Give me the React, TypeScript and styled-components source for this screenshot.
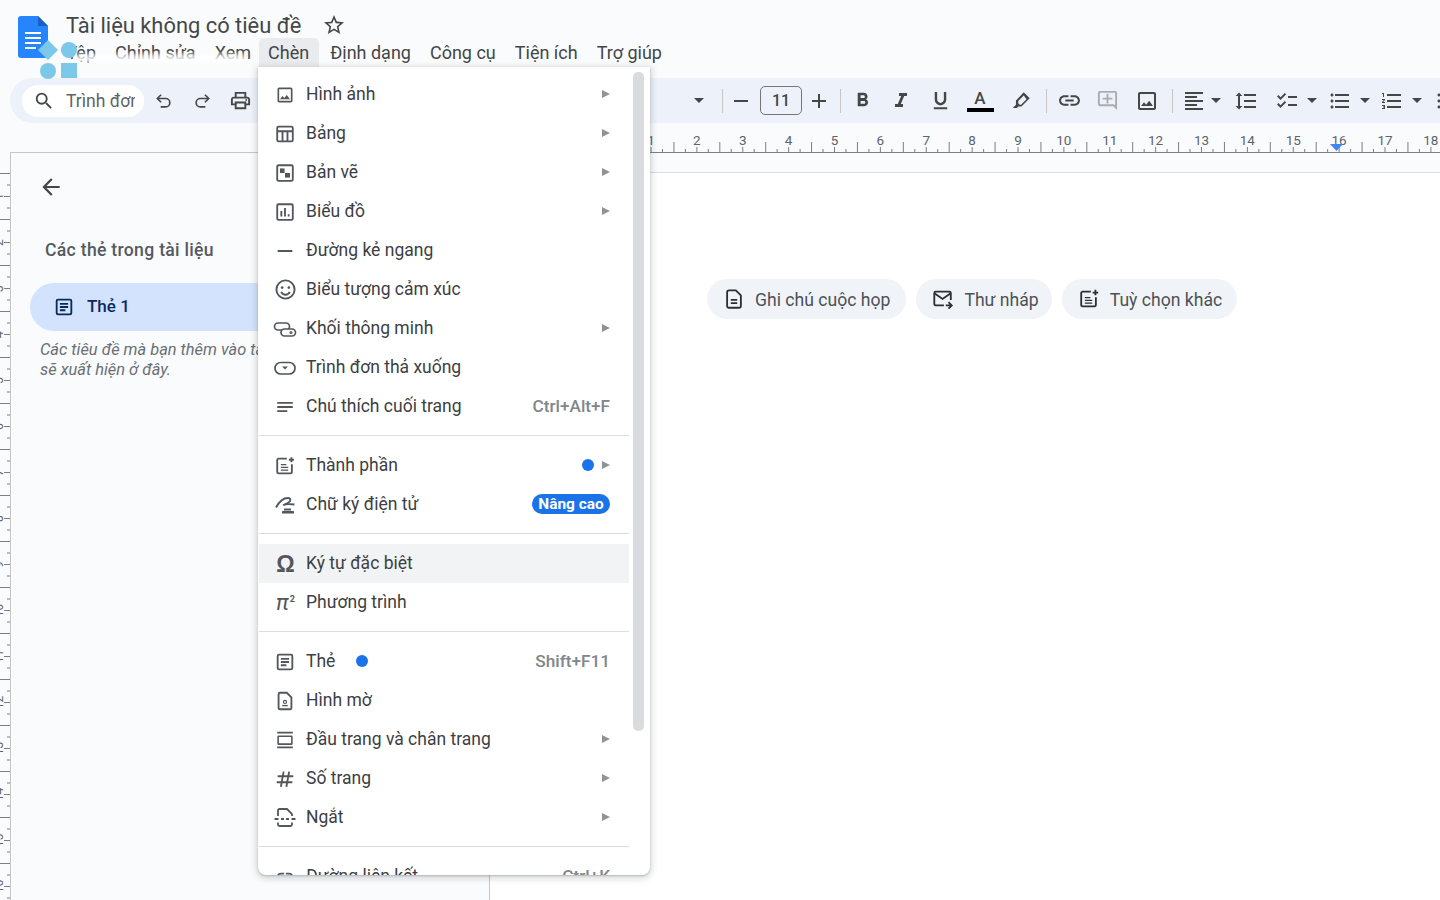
import * as React from "react";
import styled, { createGlobalStyle } from "styled-components";
import {
  MdArrowBack,
  MdChecklist,
  MdFormatAlignLeft,
  MdFormatBold,
  MdFormatItalic,
  MdFormatLineSpacing,
  MdFormatListBulleted,
  MdFormatListNumbered,
  MdFormatUnderlined,
  MdLink,
  MdOutlineAddComment,
  MdOutlineImage,
  MdOutlinePrint,
  MdSearch,
  MdStarBorder,
} from "react-icons/md";

const GlobalStyle = createGlobalStyle`
  html, body {
    margin: 0;
    height: 100%;
    overflow: hidden;
    background: #f9fbfd;
  }
  * { box-sizing: border-box; }
`;

const Page = styled.div`
  position: relative;
  width: 1440px;
  height: 900px;
  overflow: hidden;
  display: flex;
  flex-direction: column;
  background: #f9fbfd;
  color: #444746;
  font-family: Roboto, "Liberation Sans", sans-serif;
`;

/* header */
const Header = styled.header`
  height: 78px;
  display: flex;
  padding: 16px 0 0 18px;
  gap: 18px;
`;

const TitleColumn = styled.div`
  display: flex;
  flex-direction: column;
`;

const TitleRow = styled.div`
  display: flex;
  align-items: center;
  height: 22px;
  margin-top: -2px;
  gap: 21px;
  font-size: 21.9px;
  color: #444746;
  svg { font-size: 24px; color: #444746; }
`;

const MenuBar = styled.nav`
  display: flex;
  margin: 2px 0 0 -9px;
`;

const MenuItem = styled.div<{ $active?: boolean }>`
  height: 29px;
  padding: 0 9.5px;
  margin: ${(p) => (p.$active ? "0 2px 0 -2px" : "0")};
  display: flex;
  align-items: center;
  font-size: 18px;
  color: #444746;
  border-radius: 5px 5px 0 0;
  background: ${(p) => (p.$active ? "#e9ebee" : "transparent")};
`;

const LogoShapes = styled.svg`
  position: absolute;
  left: 36px;
  top: 38px;
`;

const Smudge = styled.div`
  position: absolute;
  left: 76px;
  top: 54px;
  width: 170px;
  height: 9px;
  background: rgba(255, 255, 255, 0.8);
  filter: blur(2px);
`;

/* toolbar */
const Toolbar = styled.div`
  height: 45px;
  margin-left: 10px;
  padding-left: 12px;
  display: flex;
  align-items: center;
  background: #edf2fa;
  border-radius: 23px 0 0 23px;
  overflow: hidden;
`;

const SearchPill = styled.div`
  width: 122px;
  height: 32px;
  flex: none;
  padding-left: 11px;
  display: flex;
  align-items: center;
  gap: 11px;
  background: #fff;
  border-radius: 16px;
  font-size: 17.5px;
  color: #5f6368;
  overflow: hidden;
  white-space: nowrap;
  svg { font-size: 22px; color: #444746; flex: none; }
  span { width: 69px; overflow: hidden; }
`;

const Tool = styled.div<{ $w: number; $faded?: boolean }>`
  width: ${(p) => p.$w}px;
  flex: none;
  display: flex;
  align-items: center;
  justify-content: center;
  color: ${(p) => (p.$faded ? "#a9adb1" : "#444746")};
  font-size: 23px;
`;

const ToolGap = styled.div<{ $w: number }>`
  width: ${(p) => p.$w}px;
  flex: none;
`;

const Caret = styled.span`
  width: 0;
  height: 0;
  border-left: 5px solid transparent;
  border-right: 5px solid transparent;
  border-top: 5px solid #444746;
`;

const Divider = styled.span`
  width: 1px;
  height: 24px;
  background: #c7c7c7;
`;

const SizeBox = styled.div`
  width: 42px;
  height: 29px;
  margin-left: 11px;
  flex: none;
  display: flex;
  align-items: center;
  justify-content: center;
  border: 1px solid #747775;
  border-radius: 5px;
  font-size: 16px;
  font-weight: 500;
  color: #444746;
`;

const ColorA = styled.div`
  display: flex;
  flex-direction: column;
  align-items: center;
  font-size: 17px;
  font-weight: 500;
  line-height: 19px;
  color: #444746;
  &::after {
    content: "";
    width: 27px;
    height: 4px;
    background: #000;
  }
`;

/* body */
const Body = styled.div`
  flex: 1;
  min-height: 0;
  display: flex;
`;

const VerticalRuler = styled.svg`
  width: 10px;
  height: 728px;
  margin-top: 49px;
  flex: none;
`;

const SidePanel = styled.aside`
  width: 479px;
  margin-top: 29px;
  flex: none;
  padding: 19px 0 0 19px;
  border-top: 1px solid #c7c7c7;
  border-left: 1px solid #c7c7c7;
`;

const BackButton = styled.div`
  height: 30px;
  margin-left: 8px;
  display: flex;
  align-items: center;
  font-size: 26px;
  color: #444746;
`;

const PanelTitle = styled.div`
  margin: 36px 0 0 15px;
  height: 24px;
  line-height: 24px;
  font-size: 17.6px;
  font-weight: 500;
  letter-spacing: 0.3px;
  color: #565a5f;
`;

const TabRow = styled.div`
  height: 48px;
  margin-top: 21px;
  padding: 0 0 2px 23px;
  display: flex;
  align-items: center;
  gap: 12px;
  background: #d3e3fd;
  border-radius: 24px 0 0 24px;
  font-size: 17px;
  font-weight: 500;
  color: #0b2a5c;
  svg { color: #0b2a5c; margin-top: 2px; }
`;

const PanelNote = styled.div`
  margin: 9px 0 0 10px;
  font-size: 16.4px;
  line-height: 20px;
  font-style: italic;
  color: #6b6f74;
`;

const Workspace = styled.main`
  flex: 1;
  min-width: 0;
  display: flex;
  flex-direction: column;
`;

const HorizontalRuler = styled.svg`
  width: 951px;
  height: 30px;
  flex: none;
`;

const DocSheet = styled.section`
  flex: 1;
  margin-top: 19px;
  padding: 106px 0 0 217px;
  display: flex;
  align-items: flex-start;
  gap: 10px;
  background: #fff;
  border-top: 1px solid #dadce0;
  border-left: 1px solid #c7c7c7;
`;

const Chip = styled.div<{ $right: number }>`
  height: 40px;
  padding: 1px ${(p) => p.$right}px 0 16px;
  display: flex;
  align-items: center;
  gap: 10px;
  background: #f0f4f9;
  border-radius: 20px;
  font-size: 17.6px;
  color: #4d5156;
  white-space: nowrap;
  svg { color: #2d2f31; margin-top: -1px; }
`;

/* insert menu */
const InsertMenu = styled.div`
  position: absolute;
  left: 258px;
  top: 67px;
  width: 392px;
  height: 808px;
  padding: 8px 21px 0 1px;
  background: #fff;
  border-radius: 0 0 8px 8px;
  box-shadow: 0 2px 6px 2px rgba(60, 64, 67, 0.18), 0 1px 2px rgba(60, 64, 67, 0.25);
  overflow: hidden;
`;

const MenuThumb = styled.div`
  position: absolute;
  left: 375px;
  top: 5px;
  width: 11px;
  height: 659px;
  border-radius: 5px;
  background: #d9dbde;
`;

const Row = styled.div<{ $hover?: boolean }>`
  height: 39px;
  flex: none;
  padding: 0 19px 2px 16px;
  display: flex;
  align-items: center;
  font-size: 17.5px;
  color: #3c4043;
  white-space: nowrap;
  background: ${(p) => (p.$hover ? "#f1f3f4" : "transparent")};
`;

const RowIcon = styled.span`
  width: 20px;
  margin: 2px 11px 0 0;
  flex: none;
  display: flex;
  align-items: center;
  justify-content: center;
  color: #53565a;
`;

const GlyphIcon = styled.span<{ $italic?: boolean }>`
  font-family: ${(p) => (p.$italic ? "Roboto, sans-serif" : '"Liberation Sans", sans-serif')};
  font-size: ${(p) => (p.$italic ? "22px" : "23px")};
  font-weight: ${(p) => (p.$italic ? 400 : 700)};
  font-style: ${(p) => (p.$italic ? "italic" : "normal")};
  letter-spacing: -1px;
  line-height: 20px;
  color: #53565a;
  sup { font-size: 9px; font-weight: 700; font-style: normal; vertical-align: 8px; line-height: 0; margin-left: 2px; }
`;

const RowEnd = styled.span`
  margin-left: auto;
  display: flex;
  align-items: center;
  gap: 8px;
  font-size: 17.2px;
  font-weight: 500;
  color: #80868b;
`;

const SubArrow = styled.span`
  width: 0;
  height: 0;
  border-top: 4px solid transparent;
  border-bottom: 4px solid transparent;
  border-left: 8px solid #8f9396;
`;

const Dot = styled.span<{ $inline?: boolean }>`
  width: 12px;
  height: 12px;
  margin-left: ${(p) => (p.$inline ? "21px" : "0")};
  border-radius: 50%;
  background: #1a73e8;
`;

const NewBadge = styled.span`
  width: 78px;
  height: 20px;
  display: flex;
  align-items: center;
  justify-content: center;
  border-radius: 10px;
  background: #1a73e8;
  font-size: 15.4px;
  font-weight: 700;
  color: #fff;
`;

const MenuRule = styled.div`
  height: 1px;
  margin: 9px 0 10px;
  background: #dadce0;
`;

/* icons */
const Svg: React.FC<{ size?: number; children: React.ReactNode }> = ({ size = 22, children }) => (
  <svg width={size} height={size} viewBox="0 0 24 24" fill="none" stroke="currentColor" strokeWidth={2} style={{ flex: "none" }}>
    {children}
  </svg>
);

const TabIcon = ({ size = 22 }: { size?: number }) => (
  <Svg size={size}>
    <rect x="4" y="4" width="16" height="16" rx="1.5" />
    <path d="M7.5 8.5h9M7.5 12h9M7.5 15.5h6" />
  </Svg>
);

const icons: Record<string, React.ReactNode> = {
  image: <MdOutlineImage size={24} />,
  table: (
    <Svg>
      <rect x="3.5" y="4" width="17" height="16" rx="1.5" />
      <path d="M3.5 9h17M9.3 9v11M14.7 9v11" />
    </Svg>
  ),
  drawing: (
    <Svg>
      <rect x="3.5" y="3.5" width="17" height="17" rx="1.5" />
      <rect x="6.5" y="7" width="5" height="5" fill="currentColor" stroke="none" />
      <rect x="12" y="12" width="5.5" height="5" fill="currentColor" stroke="none" />
    </Svg>
  ),
  chart: (
    <Svg>
      <rect x="3.5" y="3.5" width="17" height="17" rx="1.5" />
      <path d="M8 11v6M12 7.5V17M16 14.5V17" />
    </Svg>
  ),
  line: (
    <Svg>
      <path d="M4 12h16" />
    </Svg>
  ),
  emoji: (
    <Svg size={23}>
      <circle cx="12" cy="12" r="9.5" />
      <circle cx="8.5" cy="10" r="1.4" fill="currentColor" stroke="none" />
      <circle cx="15.5" cy="10" r="1.4" fill="currentColor" stroke="none" />
      <path d="M7.5 14.5c1 2 2.6 3 4.5 3s3.5-1 4.5-3" />
    </Svg>
  ),
  chips: (
    <Svg size={24}>
      <rect x="1.5" y="6" width="15" height="7" rx="3.5" strokeWidth={1.7} />
      <rect x="8" y="12" width="14.5" height="7" rx="3.5" fill="#fff" strokeWidth={1.7} />
      <circle cx="18" cy="15.5" r=".6" />
    </Svg>
  ),
  dropdown: (
    <Svg size={24}>
      <rect x="2" y="6.5" width="20" height="11.5" rx="5.7" strokeWidth={1.7} />
      <path d="M9 10.5h6l-3 3z" fill="currentColor" stroke="none" />
    </Svg>
  ),
  footnote: (
    <Svg>
      <path d="M3.5 7.5h17M3.5 12h17M3.5 16.5h11" />
    </Svg>
  ),
  blocks: (
    <Svg>
      <path d="M14 4H5a1.5 1.5 0 0 0-1.5 1.5v13A1.5 1.5 0 0 0 5 20h13a1.5 1.5 0 0 0 1.5-1.5V10" />
      <path d="M7.5 10.5h6M7.5 13.5h8M7.5 16.5h8" strokeWidth={1.6} />
      <path d="M19 2.5V8M16.2 5.2h5.6" />
    </Svg>
  ),
  signature: (
    <Svg size={24}>
      <path d="M3 14.5C6 9 10 5 15 5c3 0 3 3 .5 4.5L11 12" strokeWidth={1.8} />
      <path d="M10 12c2.5-1 8-1 11.5-.5" strokeWidth={1.8} />
      <rect x="11" y="15.5" width="7" height="2" fill="currentColor" stroke="none" />
      <rect x="9" y="18" width="12" height="2.5" rx=".5" fill="currentColor" stroke="none" />
    </Svg>
  ),
  omega: <GlyphIcon>Ω</GlyphIcon>,
  pi: (
    <GlyphIcon $italic>
      π<sup>2</sup>
    </GlyphIcon>
  ),
  tab: <TabIcon />,
  watermark: (
    <Svg>
      <path d="M6.5 3H14l5 5v11.5a1.5 1.5 0 0 1-1.5 1.5h-11A1.5 1.5 0 0 1 5 19.5v-15A1.5 1.5 0 0 1 6.5 3z" />
      <circle cx="12" cy="13" r="1.7" strokeWidth={1.3} />
      <path d="M9 17h6" strokeWidth={1.5} />
    </Svg>
  ),
  headerFooter: (
    <Svg>
      <path d="M3.5 4h17M3.5 20h17" />
      <rect x="4.5" y="8" width="15" height="8.5" rx=".5" strokeWidth={1.7} />
    </Svg>
  ),
  hash: (
    <Svg>
      <path d="M4 9h17M3 15.5h17M10.5 4 7.5 20.5M16.5 4l-3 16.5" />
    </Svg>
  ),
  breakIcon: (
    <Svg size={24}>
      <path d="M5 10V4.5A1.5 1.5 0 0 1 6.5 3H14l5 5v2" strokeWidth={1.8} />
      <path d="M1.5 13h4M8 13h3M13 13h3M18.5 13h4" strokeWidth={1.8} />
      <path d="M5 16.5v2A1.5 1.5 0 0 0 6.5 20h11a1.5 1.5 0 0 0 1.5-1.5v-2" strokeWidth={1.8} />
    </Svg>
  ),
  link: <MdLink size={24} />,
};

type MenuEntry =
  | "rule"
  | {
      icon: string;
      label: string;
      arrow?: boolean;
      shortcut?: string;
      dot?: "inline" | "end";
      badge?: string;
      hover?: boolean;
    };

const menuEntries: MenuEntry[] = [
  { icon: "image", label: "Hình ảnh", arrow: true },
  { icon: "table", label: "Bảng", arrow: true },
  { icon: "drawing", label: "Bản vẽ", arrow: true },
  { icon: "chart", label: "Biểu đồ", arrow: true },
  { icon: "line", label: "Đường kẻ ngang" },
  { icon: "emoji", label: "Biểu tượng cảm xúc" },
  { icon: "chips", label: "Khối thông minh", arrow: true },
  { icon: "dropdown", label: "Trình đơn thả xuống" },
  { icon: "footnote", label: "Chú thích cuối trang", shortcut: "Ctrl+Alt+F" },
  "rule",
  { icon: "blocks", label: "Thành phần", arrow: true, dot: "end" },
  { icon: "signature", label: "Chữ ký điện tử", badge: "Nâng cao" },
  "rule",
  { icon: "omega", label: "Ký tự đặc biệt", hover: true },
  { icon: "pi", label: "Phương trình" },
  "rule",
  { icon: "tab", label: "Thẻ", dot: "inline", shortcut: "Shift+F11" },
  { icon: "watermark", label: "Hình mờ" },
  { icon: "headerFooter", label: "Đầu trang và chân trang", arrow: true },
  { icon: "hash", label: "Số trang", arrow: true },
  { icon: "breakIcon", label: "Ngắt", arrow: true },
  "rule",
  { icon: "link", label: "Đường liên kết", shortcut: "Ctrl+K" },
];

// page x of each cm number, shifted to the ruler's own origin
const CM = 45.875;
const RULER_ZERO = 651 - 489;

const TopRuler = () => {
  const marks: React.ReactNode[] = [];
  for (let n = 1; n <= 18; n++) {
    const x = RULER_ZERO + (n - 1) * CM;
    marks.push(
      <text key={n} x={x} y={22} textAnchor="middle" fontSize={13.5} fontFamily="Roboto, sans-serif" fill="#5f6368">
        {n}
      </text>,
      <path
        key={`t${n}`}
        stroke="#7a7f84"
        d={`M${x} 24V29M${x + CM / 4} 26V29M${x + CM / 2} 19V29M${x + (CM * 3) / 4} 26V29`}
      />
    );
  }
  return (
    <HorizontalRuler viewBox="0 0 951 30">
      {marks}
      <path stroke="#7a7f84" d="M0 29.5H951" />
      <path d="M841 21h13l-6.5 7z" fill="#4285f4" />
    </HorizontalRuler>
  );
};

const SideRuler = () => {
  const marks: React.ReactNode[] = [];
  for (let k = 0; k < 16; k++) {
    const y = 1.5 + k * 46;
    marks.push(
      <path
        key={k}
        stroke="#7a7f84"
        d={`M0 ${y}H10M7 ${y + 11.5}H10M4 ${y + 23}H10M7 ${y + 34.5}H10`}
      />,
      <text
        key={`n${k}`}
        transform={`translate(3 ${y + 23}) rotate(-90)`}
        textAnchor="middle"
        fontSize={12}
        fontFamily="Roboto, sans-serif"
        fill="#5f6368"
      >
        {k + 1}
      </text>
    );
  }
  return <VerticalRuler viewBox="0 0 10 728">{marks}</VerticalRuler>;
};

const App = () => {
  return (
    <Page>
      <GlobalStyle />
      <Header>
        <svg width="30" height="42" viewBox="0 0 30 42" style={{ flex: "none" }}>
          <path d="M3 0h17l10 10v29a3 3 0 0 1-3 3H3a3 3 0 0 1-3-3V3a3 3 0 0 1 3-3z" fill="#2684fc" />
          <path d="M20 0l10 10H20z" fill="#1a5fc8" />
          <path d="M7 17h16M7 22h16M7 27h16M7 32h11" stroke="#fff" strokeWidth="2" />
        </svg>
        <TitleColumn>
          <TitleRow>
            Tài liệu không có tiêu đề
            <MdStarBorder />
          </TitleRow>
          <MenuBar>
            {["Tệp", "Chỉnh sửa", "Xem", "Chèn", "Định dạng", "Công cụ", "Tiện ích", "Trợ giúp"].map((m) => (
              <MenuItem key={m} $active={m === "Chèn"}>
                {m}
              </MenuItem>
            ))}
          </MenuBar>
        </TitleColumn>
      </Header>
      <Smudge />
      <LogoShapes width="44" height="42" viewBox="0 0 44 42">
        <path d="M12 2l10 10-10 10L2 12z" fill="#7cc8e8" />
        <circle cx="33" cy="12" r="8" fill="#7cc8e8" />
        <circle cx="12" cy="33" r="8" fill="#7cc8e8" />
        <rect x="25" y="25" width="16" height="15" fill="#7cc8e8" />
      </LogoShapes>

      <Toolbar>
        <SearchPill>
          <MdSearch />
          <span>Trình đơn</span>
        </SearchPill>
        <ToolGap $w={1} />
        <Tool $w={38}>
          <Svg size={20}>
            <path d="M8.5 4.5 4 9l4.5 4.5" />
            <path d="M4.5 9H14a5 5 0 0 1 0 10H8" />
          </Svg>
        </Tool>
        <Tool $w={38}>
          <Svg size={20}>
            <path d="M15.5 4.5 20 9l-4.500 4.500" />
            <path d="M19.5 9H10a5 5 0 0 0 0 10h6" />
          </Svg>
        </Tool>
        <Tool $w={39}><MdOutlinePrint /></Tool>
        <ToolGap $w={427} />
        <Tool $w={24}><Caret /></Tool>
        <Tool $w={22}><Divider /></Tool>
        <Tool $w={16}>
          <svg width="16" height="16" viewBox="0 0 16 16"><path d="M1 8h14" stroke="currentColor" strokeWidth="2" /></svg>
        </Tool>
        <SizeBox>11</SizeBox>
        <Tool $w={34}>
          <svg width="16" height="16" viewBox="0 0 16 16"><path d="M1 8h14M8 1v14" stroke="currentColor" strokeWidth="2" /></svg>
        </Tool>
        <Tool $w={8}><Divider /></Tool>
        <Tool $w={37}><MdFormatBold size={23} /></Tool>
        <Tool $w={39}><MdFormatItalic size={24} /></Tool>
        <Tool $w={40}><MdFormatUnderlined size={23} /></Tool>
        <Tool $w={40}><ColorA>A</ColorA></Tool>
        <Tool $w={42}>
          <svg width="22" height="22" viewBox="0 0 24 24" fill="currentColor">
            <path d="M15 2.5 21.5 9 12.5 18H9l-1.5 1.5H3l3.5-3.5V11.500zM15 6 9 12v2.500l1.500 1.500H12l6-6z" fillRule="evenodd" />
          </svg>
        </Tool>
        <Tool $w={8}><Divider /></Tool>
        <Tool $w={38}><MdLink size={25} /></Tool>
        <Tool $w={38} $faded><MdOutlineAddComment size={23} /></Tool>
        <Tool $w={42}><MdOutlineImage size={24} /></Tool>
        <Tool $w={8}><Divider /></Tool>
        <Tool $w={36}><MdFormatAlignLeft size={24} /></Tool>
        <Tool $w={8}><Caret /></Tool>
        <Tool $w={52}><MdFormatLineSpacing size={24} /></Tool>
        <Tool $w={30}><MdChecklist size={24} /></Tool>
        <Tool $w={20}><Caret /></Tool>
        <Tool $w={36}><MdFormatListBulleted size={24} /></Tool>
        <Tool $w={14}><Caret /></Tool>
        <Tool $w={40}><MdFormatListNumbered size={24} /></Tool>
        <Tool $w={10}><Caret /></Tool>
        <ToolGap $w={13} />
        <Tool $w={24}><MdFormatListBulleted size={24} /></Tool>
      </Toolbar>

      <Body>
        <SideRuler />
        <SidePanel>
          <BackButton><MdArrowBack /></BackButton>
          <PanelTitle>Các thẻ trong tài liệu</PanelTitle>
          <TabRow>
            <TabIcon />
            Thẻ 1
          </TabRow>
          <PanelNote>
            Các tiêu đề mà bạn thêm vào tài liệu
            <br />
            sẽ xuất hiện ở đây.
          </PanelNote>
        </SidePanel>
        <Workspace>
          <TopRuler />
          <DocSheet>
            <Chip $right={16}>
              <Svg size={22}>
                <path d="M6.5 2.5H14l5.5 5.5v12a1.5 1.5 0 0 1-1.5 1.5H6a1.5 1.5 0 0 1-1.500-1.500V4.500a2 2 0 0 1 2-2z" />
                <path d="M8.5 13h7M8.5 16.5h7" />
              </Svg>
              Ghi chú cuộc họp
            </Chip>
            <Chip $right={13}>
              <Svg size={22}>
                <path d="M13 19H4a1.5 1.5 0 0 1-1.5-1.5v-12A1.5 1.5 0 0 1 4 4h15a1.5 1.5 0 0 1 1.5 1.5V13" />
                <path d="m3 6 8.5 6L20 6" />
                <path d="M15 19h5M18 15.5l3.5 3.5-3.5 3.5" />
              </Svg>
              Thư nháp
            </Chip>
            <Chip $right={15}>
              <Svg size={22}>
                <path d="M14 4H5a1.5 1.5 0 0 0-1.5 1.5v13A1.5 1.5 0 0 0 5 20h13a1.5 1.5 0 0 0 1.5-1.5V10" />
                <path d="M7.5 10.5h6M7.5 13.5h8M7.5 16.5h8" strokeWidth={1.6} />
                <path d="M19 2v6M16 5h6" />
              </Svg>
              Tuỳ chọn khác
            </Chip>
          </DocSheet>
        </Workspace>
      </Body>

      <InsertMenu>
        {menuEntries.map((entry, i) =>
          entry === "rule" ? (
            <MenuRule key={i} />
          ) : (
            <Row key={entry.label} $hover={entry.hover}>
              <RowIcon>{icons[entry.icon]}</RowIcon>
              {entry.label}
              {entry.dot === "inline" && <Dot $inline />}
              {(entry.arrow || entry.shortcut || entry.badge) && (
                <RowEnd>
                  {entry.dot === "end" && <Dot />}
                  {entry.shortcut}
                  {entry.badge && <NewBadge>{entry.badge}</NewBadge>}
                  {entry.arrow && <SubArrow />}
                </RowEnd>
              )}
            </Row>
          )
        )}
        <MenuThumb />
      </InsertMenu>
    </Page>
  );
};

export default App;
